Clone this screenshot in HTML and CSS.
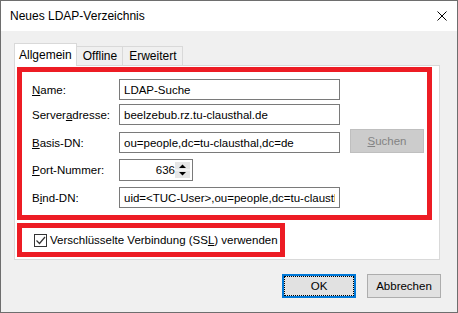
FILE: index.html
```html
<!DOCTYPE html>
<html lang="de">
<head>
  <meta charset="UTF-8">
  <title>Neues LDAP-Verzeichnis</title>
  <link rel="stylesheet" href="styles.css">
</head>
<body>
  <div class="window">
    <div class="titlebar">
      <span>Neues LDAP-Verzeichnis</span>
      <svg class="close" width="10" height="10" viewBox="0 0 10 10"><path d="M0.5 0.5 L9.5 9.5 M9.5 0.5 L0.5 9.5" stroke="#000" stroke-width="1" fill="none"/></svg>
    </div>
    <div class="content">
      <div class="tabs">
        <div class="tab active">Allgemein</div>
        <div class="tab">Offline</div>
        <div class="tab">Erweitert</div>
      </div>
      <div class="panel">
        <!-- markierte Felder -->
        <div class="mark fields">
          <div class="row">
            <label class="lbl"><u>N</u>ame:</label>
            <input class="field" type="text" value="LDAP-Suche">
          </div>
          <div class="row r2">
            <label class="lbl">Server<u>a</u>dresse:</label>
            <input class="field" type="text" value="beelzebub.rz.tu-clausthal.de">
          </div>
          <div class="row r3">
            <label class="lbl"><u>B</u>asis-DN:</label>
            <input class="field" type="text" value="ou=people,dc=tu-clausthal,dc=de">
            <button class="search" disabled><u>S</u>uchen</button>
          </div>
          <div class="row r4">
            <label class="lbl"><u>P</u>ort-Nummer:</label>
            <div class="port">
              <span>636</span>
              <svg class="spin" width="15" height="16" viewBox="0 0 15 16">
                <rect x="0" y="0" width="15" height="16" fill="#e6e6e6"/>
                <line x1="0" y1="8" x2="15" y2="8" stroke="#fff"/>
                <path d="M4 6 L11 6 L7.5 2.5 Z" fill="#000"/>
                <path d="M4 10 L11 10 L7.5 13.5 Z" fill="#000"/>
              </svg>
            </div>
          </div>
          <div class="row r5">
            <label class="lbl">B<u>i</u>nd-DN:</label>
            <input class="field" type="text" value="uid=&lt;TUC-User&gt;,ou=people,dc=tu-clausthal,dc=de">
          </div>
        </div>
        <div class="mark ssl">
          <span class="check">
            <svg width="11" height="11" viewBox="0 0 11 11"><path d="M1.5 5.5 L4.5 8.5 L10 2" stroke="#333" stroke-width="1.2" fill="none"/></svg>
          </span>
          <span class="ssl-text">Verschlüsselte Verbindung (SS<u>L</u>) verwenden</span>
        </div>
      </div>
      <div class="actions">
        <button class="btn default">OK</button>
        <button class="btn">Abbrechen</button>
      </div>
    </div>
  </div>
</body>
</html>
```

FILE: styles.css
```css
body {
  margin: 0;
  font-family: "Liberation Sans", Arial, sans-serif;
  font-size: 11.5px;
  color: #000;
}

.window {
  width: 458px;
  height: 313px;
  box-sizing: border-box;
  border: 1px solid #6e6e6e;
  background-color: #f0f0f0;
}

.titlebar {
  height: 30px;
  background-color: #fff;
  display: flex;
  align-items: center;
  justify-content: space-between;
  padding: 0 10px 0 9px;
  font-size: 12px;
}

.content {
  padding: 12px 17px 0 13px;
}

/* Reiter */
.tabs {
  display: flex;
  align-items: flex-end;
  height: 22px;
  position: relative;
  z-index: 1;
}
.tab {
  height: 19px;
  line-height: 18px;
  padding: 0 5px 0 6px;
  box-sizing: border-box;
  border: 1px solid #d9d9d9;
  border-bottom: none;
  margin-left: -1px;
  font-size: 12px;
}
.tab.active {
  height: 23px;
  line-height: 22px;
  padding: 0 4px;
  margin-bottom: -1px;
  margin-left: 0;
  background-color: #fff;
}

.panel {
  background-color: #fff;
  border: 1px solid #d9d9d9;
  padding: 1px 0 2px 2px;
}

.mark {
  border: 5px solid #ed1c24;
  box-sizing: border-box;
}
.fields {
  width: 415px;
  padding: 7px 0 7px 10px;
}
.row {
  display: flex;
  align-items: flex-end;
  height: 21px;
}
.r2 { margin-top: 4px; }
.r3 { margin-top: 7px; }
.r4 { margin-top: 6px; height: 22px; }
.r5 { margin-top: 6px; }

.lbl {
  width: 87px;
  align-self: center;
}
.field {
  width: 221px;
  height: 21px;
  box-sizing: border-box;
  border: 1px solid #7a7a7a;
  padding: 0 4px;
  margin: 0;
  font: inherit;
  color: #000;
  background-color: #fff;
}

.search {
  width: 74px;
  height: 24px;
  flex-shrink: 0;
  margin-left: 10px;
  border: 1px solid #bfbfbf;
  background-color: #cccccc;
  color: #838383;
  font: inherit;
  padding: 0;
}

.port {
  width: 74px;
  height: 22px;
  box-sizing: border-box;
  border: 1px solid #7a7a7a;
  display: flex;
  align-items: center;
  justify-content: flex-end;
  padding-right: 2px;
}
.spin {
  display: block;
}

.ssl {
  width: 268px;
  height: 34px;
  margin-top: 3px;
  display: flex;
  align-items: center;
  padding-left: 12px;
}
.ssl-text {
  white-space: nowrap;
}
.check {
  width: 13px;
  height: 13px;
  flex-shrink: 0;
  box-sizing: border-box;
  border: 1px solid #333;
  display: flex;
  align-items: center;
  justify-content: center;
  margin-right: 3px;
}

.actions {
  display: flex;
  justify-content: flex-end;
  gap: 11px;
  margin-top: 14px;
  margin-right: -1px;
}
.btn {
  width: 74px;
  height: 24px;
  border: 1px solid #adadad;
  background-color: #e1e1e1;
  font: inherit;
  color: #000;
  padding: 0;
}
.btn.default {
  border-color: #0078d7;
  box-shadow: inset 0 0 0 1px #0078d7;
  outline: 1px dotted #000;
  outline-offset: -3px;
}
```
